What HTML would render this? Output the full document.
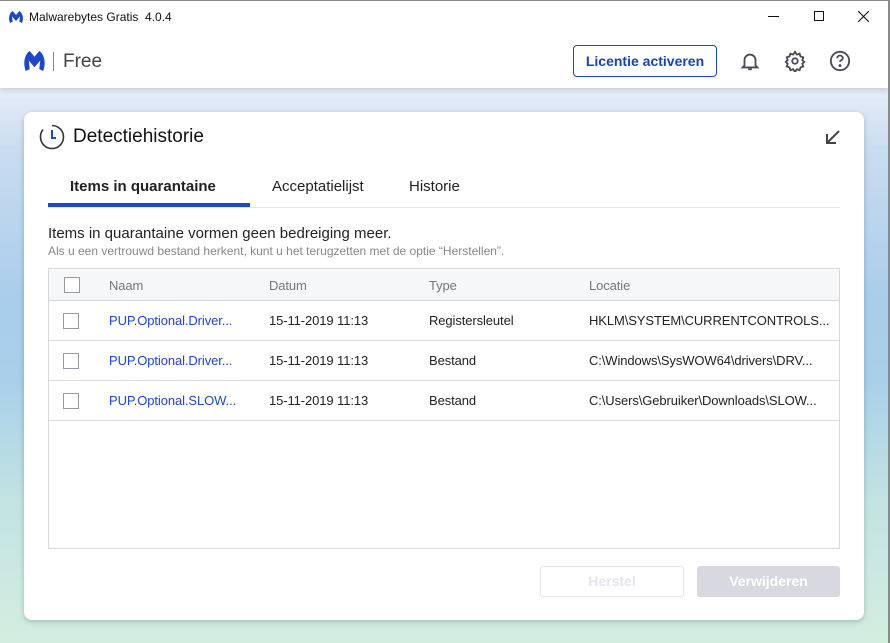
<!DOCTYPE html><html><head><style>
*{margin:0;padding:0;box-sizing:border-box}
body{width:890px;height:643px;overflow:hidden;font-family:"Liberation Sans",sans-serif;position:relative;
background:linear-gradient(180deg,#e6eef8 88px,#c9dcf0 150px,#a9cdec 300px,#a8d0ea 380px,#c2e3e2 500px,#d3eee0 643px);}
.abs{position:absolute}
.top{left:0;top:0;width:890px;height:88px;background:#fff;border-top:1px solid #888;box-shadow:0 2px 6px rgba(0,0,0,.15)}
.rb{right:0;top:0;width:2px;height:643px;background:#8a8a8a}
.card{left:24px;top:112px;width:840px;height:508px;background:#fff;border-radius:8px;box-shadow:0 2px 6px rgba(0,0,0,.2)}
.row{left:48px;width:792px;height:40px;border-bottom:1px solid #dcdce4}
.cb{position:absolute;left:15px;top:12px;width:16px;height:16px;border:1px solid #9a9aa6;background:#fff}
.c{position:absolute;top:12px;font-size:13px;color:#222;white-space:nowrap;letter-spacing:-0.1px}
</style></head><body>
<div class="abs top">
 <svg class="abs" style="left:8px;top:8px" width="16" height="16" viewBox="0 0 24 24"><path d="M3 21C0 14 2 6 7 3l5 6 5-6c5 3 7 11 4 18l-4-2 1-8-6 7-6-7 1 8z" fill="#1d46c8"/></svg>
 <div class="abs" style="left:29px;top:9px;font-size:12px;color:#111">Malwarebytes Gratis&nbsp; 4.0.4</div>
 <div class="abs" style="left:768px;top:15px;width:11px;height:1px;background:#111"></div>
 <div class="abs" style="left:814px;top:10px;width:10px;height:10px;border:1px solid #111"></div>
 <svg class="abs" style="left:858px;top:10px" width="11" height="11" viewBox="0 0 11 11" stroke="#111" stroke-width="1.1"><path d="M0 0L11 11M11 0L0 11"/></svg>
 <svg class="abs" style="left:23px;top:49px" width="23" height="22" viewBox="0 0 24 23"><path d="M3 22C0 15 1 5 7 1l5 6 5-6c6 4 7 14 4 21l-4-2 1-9-6 7-6-7 1 9z" fill="#1d46c8"/></svg>
 <div class="abs" style="left:53px;top:51px;width:1px;height:19px;background:#888"></div>
 <div class="abs" style="left:63px;top:50px;font-size:19px;color:#444">Free</div>
 <div class="abs" style="left:573px;top:44px;width:144px;height:32px;border:1px solid #1d46c8;border-radius:4px;color:#1d3fb8;font-weight:bold;font-size:14px;text-align:center;line-height:30px">Licentie activeren</div>
 <svg class="abs" style="left:739px;top:49px" width="22" height="22" viewBox="0 0 24 24" fill="none" stroke="#4a4a55" stroke-width="2"><path d="M6 17V11a6 6 0 0112 0v6l2 2H4z"/><path d="M10 21h4"/></svg>
 <svg class="abs" style="left:784px;top:49px" width="22" height="22" viewBox="0 0 24 24" fill="none" stroke="#4a4a55" stroke-width="2"><circle cx="12" cy="12" r="3"/><path d="M12 2l2 3 3-1 1 3 3 1-1 3 2 2-2 2 1 3-3 1-1 3-3-1-2 3-2-3-3 1-1-3-3-1 1-3-2-2 2-2-1-3 3-1 1-3 3 1z"/></svg>
 <svg class="abs" style="left:829px;top:49px" width="22" height="22" viewBox="0 0 24 24" fill="none" stroke="#4a4a55" stroke-width="2"><circle cx="12" cy="12" r="10"/><path d="M9 9a3 3 0 116 0c0 2-3 2-3 4"/><circle cx="12" cy="17" r=".6" fill="#4a4a55"/></svg>
</div>
<div class="abs rb"></div>
<div class="abs card"></div>
<svg class="abs" style="left:39px;top:124px" width="26" height="26" viewBox="0 0 26 26" fill="none"><path d="M13 1.5A11.5 11.5 0 111.5 13A11.5 11.5 0 014 5.5" stroke="#333" stroke-width="1.6"/><path d="M13 6v8h4" stroke="#1d46c8" stroke-width="2"/></svg>
<div class="abs" style="left:73px;top:126px;font-size:19px;color:#111">Detectiehistorie</div>
<svg class="abs" style="left:824px;top:128px" width="18" height="18" viewBox="0 0 18 18" fill="none" stroke="#444" stroke-width="2"><path d="M15 3L3 15M3 6v9h9"/></svg>
<div class="abs" style="left:48px;top:207px;width:792px;height:1px;background:#e6e6ea"></div>
<div class="abs" style="left:48px;top:203px;width:202px;height:4px;background:#1d46c8"></div>
<div class="abs" style="left:70px;top:178px;font-size:15px;font-weight:bold;color:#222">Items in quarantaine</div>
<div class="abs" style="left:272px;top:178px;font-size:15px;color:#222">Acceptatielijst</div>
<div class="abs" style="left:409px;top:178px;font-size:15px;color:#222">Historie</div>
<div class="abs" style="left:48px;top:225px;font-size:15px;color:#222">Items in quarantaine vormen geen bedreiging meer.</div>
<div class="abs" style="left:48px;top:244px;font-size:12px;color:#888">Als u een vertrouwd bestand herkent, kunt u het terugzetten met de optie “Herstellen”.</div>
<div class="abs" style="left:48px;top:268px;width:792px;height:281px;border:1px solid #d6d6de"></div>
<div class="abs row" style="top:268px;height:33px;background:#f6f7f9;border:1px solid #d6d6de"><div class="cb" style="top:8px"></div>
<div class="c" style="left:60px;top:9px;color:#777">Naam</div><div class="c" style="left:220px;top:9px;color:#777">Datum</div><div class="c" style="left:380px;top:9px;color:#777">Type</div><div class="c" style="left:540px;top:9px;color:#777">Locatie</div></div>
<div class="abs row" style="top:301px"><div class="cb"></div><div class="c" style="left:61px;color:#1d46c8">PUP.Optional.Driver...</div><div class="c" style="left:221px">15-11-2019 11:13</div><div class="c" style="left:381px">Registersleutel</div><div class="c" style="left:541px">HKLM\SYSTEM\CURRENTCONTROLS...</div></div>
<div class="abs row" style="top:341px"><div class="cb"></div><div class="c" style="left:61px;color:#1d46c8">PUP.Optional.Driver...</div><div class="c" style="left:221px">15-11-2019 11:13</div><div class="c" style="left:381px">Bestand</div><div class="c" style="left:541px">C:\Windows\SysWOW64\drivers\DRV...</div></div>
<div class="abs row" style="top:381px"><div class="cb"></div><div class="c" style="left:61px;color:#1d46c8">PUP.Optional.SLOW...</div><div class="c" style="left:221px">15-11-2019 11:13</div><div class="c" style="left:381px">Bestand</div><div class="c" style="left:541px">C:\Users\Gebruiker\Downloads\SLOW...</div></div>
<div class="abs" style="left:540px;top:566px;width:144px;height:31px;border:1px solid #e4e4ea;border-radius:3px;color:#e4e4ee;font-weight:bold;font-size:14px;text-align:center;line-height:29px">Herstel</div>
<div class="abs" style="left:697px;top:566px;width:143px;height:31px;background:#d8d9e0;border-radius:3px;color:#fff;font-weight:bold;font-size:14px;text-align:center;line-height:31px">Verwijderen</div>
</body></html>
